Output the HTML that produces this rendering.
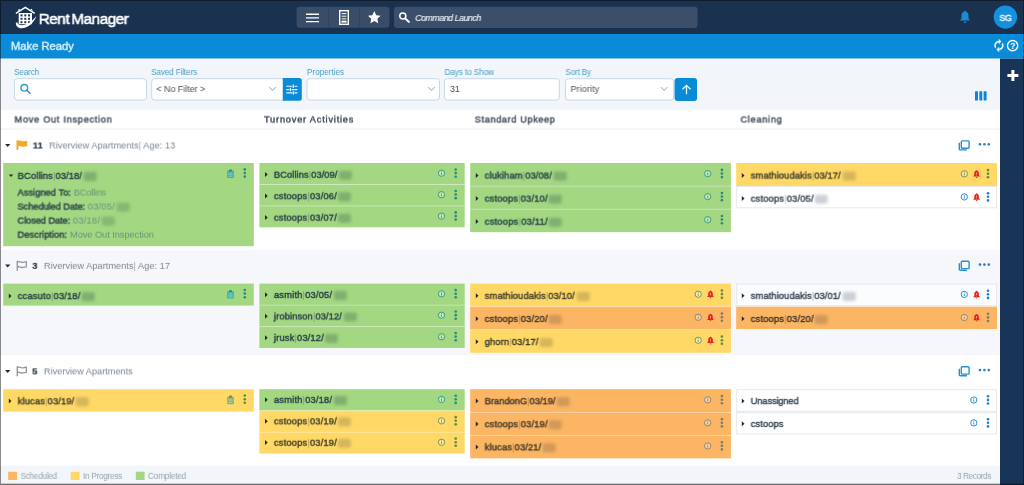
<!DOCTYPE html>
<html lang="en"><head><meta charset="utf-8"><title>Make Ready</title>
<style>
*{box-sizing:border-box;margin:0;padding:0}
html,body{width:1024px;height:485px;overflow:hidden;background:#fff;font-family:"Liberation Sans", sans-serif;}
body{position:relative}
.t{position:absolute;white-space:nowrap;line-height:1;will-change:transform}
.m{-webkit-text-stroke:0.38px currentColor}
.bl{position:absolute;width:13px;height:9px;margin-left:1.500px;margin-top:0.200px;filter:blur(1.500px);border-radius:2px}
.p{opacity:.4;-webkit-text-stroke:0}
svg{position:absolute;left:0;top:0;overflow:visible}
</style></head>
<body>
<svg width="1024" height="485" viewBox="0 0 1024 485">
<rect x="0.00" y="0.00" width="1024.00" height="34.00" fill="#1a3250"/>
<rect x="0.00" y="34.00" width="1024.00" height="24.70" fill="#0a8bd7"/>
<rect x="0.00" y="58.70" width="1000.00" height="51.30" fill="#f2f6fa"/>
<rect x="0.00" y="110.00" width="1000.00" height="19.10" fill="#fff"/>
<rect x="0.00" y="128.70" width="1000.00" height="1.00" fill="#e1e5ea"/>
<rect x="1000.00" y="58.70" width="24.00" height="427.00" fill="#183558"/>
<rect x="296.60" y="6.70" width="92.80" height="21.10" fill="#3a4d68" rx="3"/>
<rect x="328.00" y="6.70" width="1.00" height="21.10" fill="#32435c"/>
<rect x="359.00" y="6.70" width="1.00" height="21.10" fill="#32435c"/>
<rect x="394.00" y="6.80" width="303.50" height="21.10" fill="#3b4f6b" rx="3"/>
<rect x="14.50" y="78.70" width="132.00" height="21.40" fill="#fff" rx="3" stroke="#c6d9e7" stroke-width="1"/>
<rect x="151.70" y="78.70" width="132.80" height="21.40" fill="#fff" rx="3" stroke="#c6d9e7" stroke-width="1"/>
<rect x="280.00" y="78.00" width="21.80" height="22.70" fill="#0a8bd7" rx="2.5"/>
<rect x="279.50" y="77.50" width="3.00" height="24.00" fill="#f2f6fa"/>
<rect x="279.50" y="79.20" width="3.00" height="20.40" fill="#fff"/>
<rect x="279.50" y="78.20" width="3.00" height="1.00" fill="#c6d9e7"/>
<rect x="279.50" y="99.60" width="3.00" height="1.00" fill="#c6d9e7"/>
<rect x="307.00" y="78.70" width="132.50" height="21.40" fill="#fff" rx="3" stroke="#c6d9e7" stroke-width="1"/>
<rect x="444.50" y="78.70" width="114.80" height="21.40" fill="#fff" rx="3" stroke="#c6d9e7" stroke-width="1"/>
<rect x="565.50" y="78.70" width="108.10" height="21.40" fill="#fff" rx="3" stroke="#c6d9e7" stroke-width="1"/>
<rect x="674.60" y="78.00" width="22.50" height="22.90" fill="#0a8bd7" rx="3"/>
<rect x="975.00" y="91.20" width="3.00" height="9.40" fill="#0f86d2" rx="0.5"/>
<rect x="979.30" y="91.20" width="3.00" height="9.40" fill="#0f86d2" rx="0.5"/>
<rect x="983.60" y="91.20" width="3.00" height="9.40" fill="#0f86d2" rx="0.5"/>
<rect x="1007.40" y="74.00" width="11.00" height="3.00" fill="#fff"/>
<rect x="1011.40" y="70.00" width="3.00" height="11.00" fill="#fff"/>
<rect x="0.00" y="129.60" width="1000.00" height="120.60" fill="#fff"/>
<rect x="3.20" y="163.00" width="250.60" height="83.20" fill="#a3d782"/>
<rect x="259.40" y="163.00" width="205.30" height="21.45" fill="#a3d782"/>
<rect x="259.40" y="184.45" width="205.30" height="21.45" fill="#a3d782"/>
<rect x="259.40" y="184.05" width="205.30" height="1.00" fill="rgba(255,255,255,.32)"/>
<rect x="259.40" y="205.90" width="205.30" height="21.45" fill="#a3d782"/>
<rect x="259.40" y="205.50" width="205.30" height="1.00" fill="rgba(255,255,255,.32)"/>
<rect x="470.20" y="163.00" width="260.70" height="23.05" fill="#a3d782"/>
<rect x="470.20" y="186.05" width="260.70" height="23.05" fill="#a3d782"/>
<rect x="470.20" y="185.65" width="260.70" height="1.00" fill="rgba(255,255,255,.32)"/>
<rect x="470.20" y="209.10" width="260.70" height="23.05" fill="#a3d782"/>
<rect x="470.20" y="208.70" width="260.70" height="1.00" fill="rgba(255,255,255,.32)"/>
<rect x="736.20" y="163.00" width="260.80" height="23.05" fill="#ffd866"/>
<rect x="736.70" y="186.60" width="259.80" height="21.20" fill="rgba(255,255,255,.6)" stroke="#e5e9ee" stroke-width="1"/>
<rect x="0.00" y="250.00" width="1000.00" height="105.50" fill="#f5f7fb"/>
<rect x="3.20" y="283.60" width="250.60" height="22.00" fill="#a3d782"/>
<rect x="259.40" y="283.60" width="205.30" height="21.45" fill="#a3d782"/>
<rect x="259.40" y="305.05" width="205.30" height="21.45" fill="#a3d782"/>
<rect x="259.40" y="304.65" width="205.30" height="1.00" fill="rgba(255,255,255,.32)"/>
<rect x="259.40" y="326.50" width="205.30" height="21.45" fill="#a3d782"/>
<rect x="259.40" y="326.10" width="205.30" height="1.00" fill="rgba(255,255,255,.32)"/>
<rect x="470.20" y="283.60" width="260.70" height="23.05" fill="#ffd866"/>
<rect x="470.20" y="306.65" width="260.70" height="23.05" fill="#fbb563"/>
<rect x="470.20" y="306.25" width="260.70" height="1.00" fill="rgba(255,255,255,.32)"/>
<rect x="470.20" y="329.70" width="260.70" height="23.05" fill="#ffd866"/>
<rect x="470.20" y="329.30" width="260.70" height="1.00" fill="rgba(255,255,255,.32)"/>
<rect x="736.70" y="284.10" width="259.80" height="21.60" fill="rgba(255,255,255,.6)" stroke="#e5e9ee" stroke-width="1"/>
<rect x="736.20" y="306.70" width="260.80" height="22.30" fill="#fbb563"/>
<rect x="0.00" y="355.50" width="1000.00" height="110.20" fill="#fff"/>
<rect x="3.20" y="389.20" width="250.60" height="22.40" fill="#ffd866"/>
<rect x="259.40" y="389.20" width="205.30" height="21.45" fill="#a3d782"/>
<rect x="259.40" y="410.65" width="205.30" height="21.45" fill="#ffd866"/>
<rect x="259.40" y="410.25" width="205.30" height="1.00" fill="rgba(255,255,255,.32)"/>
<rect x="259.40" y="432.10" width="205.30" height="21.45" fill="#ffd866"/>
<rect x="259.40" y="431.70" width="205.30" height="1.00" fill="rgba(255,255,255,.32)"/>
<rect x="470.20" y="389.20" width="260.70" height="23.05" fill="#fbb563"/>
<rect x="470.20" y="412.25" width="260.70" height="23.05" fill="#fbb563"/>
<rect x="470.20" y="411.85" width="260.70" height="1.00" fill="rgba(255,255,255,.32)"/>
<rect x="470.20" y="435.30" width="260.70" height="23.05" fill="#fbb563"/>
<rect x="470.20" y="434.90" width="260.70" height="1.00" fill="rgba(255,255,255,.32)"/>
<rect x="736.70" y="389.70" width="259.80" height="21.60" fill="rgba(255,255,255,.6)" stroke="#e5e9ee" stroke-width="1"/>
<rect x="736.70" y="412.60" width="259.80" height="21.40" fill="rgba(255,255,255,.6)" stroke="#e5e9ee" stroke-width="1"/>
<rect x="0.00" y="465.60" width="1000.00" height="20.00" fill="#f2f6fa"/>
<rect x="8.20" y="471.70" width="8.80" height="8.30" fill="#fbb563"/>
<rect x="70.70" y="471.70" width="8.80" height="8.30" fill="#ffd866"/>
<rect x="135.80" y="471.70" width="8.80" height="8.30" fill="#a3d782"/>
<g transform="translate(15.00 6.00)"><path d="M0.900 7.300 L10.300 1.300 L19.700 7.300" fill="none" stroke="#fff" stroke-width="1.500"/>
<path d="M2.700 4.900 L3.900 2.700 L5.300 3.800z M15.300 3.800 L16.700 2.700 L17.900 4.900z" fill="#fff"/>
<rect x="3.700" y="7" width="13.300" height="11.200" fill="#fff"/>
<g fill="#1a3250"><rect x="5.500" y="8.400" width="2" height="2"/><rect x="9.300" y="8.400" width="2" height="2"/><rect x="13" y="8.400" width="2" height="2"/>
<rect x="5.500" y="11.800" width="2" height="2"/><rect x="9.300" y="11.800" width="2" height="2"/><rect x="13" y="11.800" width="2" height="2"/>
<rect x="5.500" y="15.200" width="2" height="2"/><rect x="9.300" y="15.200" width="2" height="2"/><rect x="13" y="15.200" width="2" height="2"/></g>
<path d="M0.900 16.400 C0.200 22.900 8.600 23.700 14.100 19.700 C18.100 16.800 20.400 13.400 21.400 10 C19.400 12.900 16.600 15.400 12.800 17.500 C8 20.100 3.300 19.700 2.400 16.600z" fill="#fff"/></g>
<g transform="translate(306.00 13.00)"><path d="M0 1.200h13M0 4.900h13M0 8.600h13" stroke="#fff" stroke-width="1.400"/></g>
<g transform="translate(339.00 10.00)"><rect x="0.700" y="0.700" width="8.600" height="13.600" fill="none" stroke="#fff" stroke-width="1.400"/><path d="M2.600 3.600h4.800M2.600 6.200h4.800M2.600 8.800h4.800" stroke="#fff" stroke-width="1"/><rect x="2.400" y="10.600" width="5.200" height="2" fill="#fff"/></g>
<g transform="translate(367.80 10.80) scale(0.5417)"><path d="M12 0.500l3.600 7.600 8 1-5.900 5.600 1.500 8.100L12 18.800 4.800 22.800l1.500-8.100L0.400 9.100l8-1z" fill="#fff"/></g>
<g transform="translate(398.00 11.00)"><circle cx="4.800" cy="5" r="3.050" fill="none" stroke="#fff" stroke-width="1.500"/><path d="M7.300 7.500l3.700 3.500" stroke="#fff" stroke-width="1.800" stroke-linecap="round"/></g>
<g transform="translate(960.00 10.50)"><path d="M5 0.200c0.700 0 1 0.500 1 1 1.700 0.500 2.500 2 2.500 3.800v3l1.300 1.500v0.600H0.200v-0.600l1.300-1.500v-3c0-1.800 0.800-3.300 2.500-3.800 0-0.500 0.300-1 1-1z" fill="#1c8ad0"/><path d="M3.700 10.900h2.600c0 0.900-0.600 1.500-1.300 1.500s-1.300-0.600-1.300-1.500z" fill="#1c8ad0"/></g>
<g transform="translate(1005.40 17.10)"><circle cx="0" cy="0" r="11.700" fill="#1590dc"/></g>
<g transform="translate(992.20 38.80) scale(0.56)"><path d="M12 6v3l4-4-4-4v3c-4.420 0-8 3.580-8 8 0 1.570.46 3.030 1.240 4.260L6.700 14.800c-.45-.83-.7-1.790-.7-2.800 0-3.310 2.690-6 6-6zm6.760 1.740L17.300 9.200c.44.84.7 1.790.7 2.800 0 3.310-2.690 6-6 6v-3l-4 4 4 4v-3c4.420 0 8-3.580 8-8 0-1.570-.46-3.030-1.240-4.260z" fill="#fff" stroke="#fff" stroke-width="0.700"/></g>
<g transform="translate(1012.60 45.60)"><circle cx="0" cy="0" r="5.150" fill="none" stroke="#fff" stroke-width="1.400"/></g>
<g transform="translate(19.50 83.40)"><circle cx="4.800" cy="4.400" r="3.350" fill="none" stroke="#2f9dbd" stroke-width="1.350"/><path d="M7.400 6.900l3.100 3" stroke="#3f7fb0" stroke-width="1.500" stroke-linecap="round"/></g>
<g transform="translate(268.80 86.60)"><path d="M0.500 0.500l3.200 3.300 3.200-3.300" fill="none" stroke="#9a9ea2" stroke-width="1"/></g>
<g transform="translate(286.30 84.50) scale(0.96)"><g stroke="#e8f6ff" stroke-width="1.200" fill="none"><path d="M0 1.800h6.200M8.400 1.800h3.200M7.300 0v3.600"/><path d="M0 5.300h3.200M5.400 5.300h6.200M4.300 3.500v3.600"/><path d="M0 8.800h6.200M8.400 8.800h3.200M7.300 7v3.600"/></g></g>
<g transform="translate(427.80 86.60)"><path d="M0.500 0.500l3.200 3.300 3.200-3.300" fill="none" stroke="#9a9ea2" stroke-width="1"/></g>
<g transform="translate(660.40 86.60)"><path d="M0.500 0.500l3.200 3.300 3.200-3.300" fill="none" stroke="#9a9ea2" stroke-width="1"/></g>
<g transform="translate(681.80 84.30)"><path d="M4.700 10V1.400M0.700 5l4-4 4 4" fill="none" stroke="#e8f6ff" stroke-width="1.300"/></g>
<g transform="translate(5.10 145.60)"><path d="M0 -1.500h5.200l-2.600 3z" fill="#1c2a33"/></g>
<g transform="translate(16.50 140.20)"><rect x="0" y="0" width="1.900" height="9.600" rx="0.400" fill="#f5a828"/><path d="M1.500 0.600c2-0.800 3.200 0.400 4.700 0.500s2.600-0.500 4.500-0.600v5.500c-1.900 0.100-3 0.700-4.500 0.600s-2.700-1.300-4.700-0.500z" fill="#f5a828"/></g>
<g transform="translate(958.60 140.20)"><rect x="2.700" y="0.700" width="7.800" height="7.300" rx="0.900" fill="none" stroke="#2b8fcf" stroke-width="1.400"/><path d="M0.700 2.600v6.100c0 0.600 0.400 1 1 1h6.600" fill="none" stroke="#2b8fcf" stroke-width="1.400"/></g>
<g transform="translate(980.00 144.20)"><circle cx="0" cy="0" r="1.300" fill="#2a7dc0"/></g>
<g transform="translate(984.40 144.20)"><circle cx="0" cy="0" r="1.300" fill="#2a7dc0"/></g>
<g transform="translate(988.80 144.20)"><circle cx="0" cy="0" r="1.300" fill="#2a7dc0"/></g>
<g transform="translate(8.80 175.70)"><path d="M0 -1.300h4.400l-2.200 2.600z" fill="#1c2a33"/></g>
<g transform="translate(227.10 169.40)"><rect x="0" y="1.200" width="6.800" height="7.400" rx="0.700" fill="#3fb3a8"/><rect x="2" y="0" width="2.800" height="2" rx="0.500" fill="#2f8f70"/><path d="M1.300 3.700h4.200M1.300 5.300h4.200M1.300 6.900h4.200" stroke="rgba(255,255,255,.55)" stroke-width="0.600"/></g>
<g transform="translate(244.80 173.00)"><circle cx="0" cy="-3.600" r="1.300" fill="#2a8c78"/><circle cx="0" cy="0" r="1.300" fill="#2a8c78"/><circle cx="0" cy="3.600" r="1.300" fill="#2a8c78"/></g>
<g transform="translate(265.00 174.60)"><path d="M0 -2.500l2.700 2.500-2.700 2.500z" fill="#1c2a33"/></g>
<g transform="translate(441.50 173.20)"><circle cx="0" cy="0" r="3.150" fill="rgba(255,255,255,.42)" stroke="#3a9d80" stroke-width="1"/><path d="M0 -0.600v2.300" stroke="#3a9d80" stroke-width="0.950"/><circle cx="0" cy="-1.650" r="0.520" fill="#3a9d80"/></g>
<g transform="translate(455.70 173.10)"><circle cx="0" cy="-3.600" r="1.300" fill="#2a8c78"/><circle cx="0" cy="0" r="1.300" fill="#2a8c78"/><circle cx="0" cy="3.600" r="1.300" fill="#2a8c78"/></g>
<g transform="translate(265.00 196.05)"><path d="M0 -2.500l2.700 2.500-2.700 2.500z" fill="#1c2a33"/></g>
<g transform="translate(441.50 194.65)"><circle cx="0" cy="0" r="3.150" fill="rgba(255,255,255,.42)" stroke="#3a9d80" stroke-width="1"/><path d="M0 -0.600v2.300" stroke="#3a9d80" stroke-width="0.950"/><circle cx="0" cy="-1.650" r="0.520" fill="#3a9d80"/></g>
<g transform="translate(455.70 194.55)"><circle cx="0" cy="-3.600" r="1.300" fill="#2a8c78"/><circle cx="0" cy="0" r="1.300" fill="#2a8c78"/><circle cx="0" cy="3.600" r="1.300" fill="#2a8c78"/></g>
<g transform="translate(265.00 217.50)"><path d="M0 -2.500l2.700 2.500-2.700 2.500z" fill="#1c2a33"/></g>
<g transform="translate(441.50 216.10)"><circle cx="0" cy="0" r="3.150" fill="rgba(255,255,255,.42)" stroke="#3a9d80" stroke-width="1"/><path d="M0 -0.600v2.300" stroke="#3a9d80" stroke-width="0.950"/><circle cx="0" cy="-1.650" r="0.520" fill="#3a9d80"/></g>
<g transform="translate(455.70 216.00)"><circle cx="0" cy="-3.600" r="1.300" fill="#2a8c78"/><circle cx="0" cy="0" r="1.300" fill="#2a8c78"/><circle cx="0" cy="3.600" r="1.300" fill="#2a8c78"/></g>
<g transform="translate(475.80 175.40)"><path d="M0 -2.500l2.700 2.500-2.700 2.500z" fill="#1c2a33"/></g>
<g transform="translate(707.70 173.60)"><circle cx="0" cy="0" r="3.150" fill="rgba(255,255,255,.42)" stroke="#3a9d80" stroke-width="1"/><path d="M0 -0.600v2.300" stroke="#3a9d80" stroke-width="0.950"/><circle cx="0" cy="-1.650" r="0.520" fill="#3a9d80"/></g>
<g transform="translate(721.90 173.50)"><circle cx="0" cy="-3.600" r="1.300" fill="#2a8c78"/><circle cx="0" cy="0" r="1.300" fill="#2a8c78"/><circle cx="0" cy="3.600" r="1.300" fill="#2a8c78"/></g>
<g transform="translate(475.80 198.45)"><path d="M0 -2.500l2.700 2.500-2.700 2.500z" fill="#1c2a33"/></g>
<g transform="translate(707.70 196.65)"><circle cx="0" cy="0" r="3.150" fill="rgba(255,255,255,.42)" stroke="#3a9d80" stroke-width="1"/><path d="M0 -0.600v2.300" stroke="#3a9d80" stroke-width="0.950"/><circle cx="0" cy="-1.650" r="0.520" fill="#3a9d80"/></g>
<g transform="translate(721.90 196.55)"><circle cx="0" cy="-3.600" r="1.300" fill="#2a8c78"/><circle cx="0" cy="0" r="1.300" fill="#2a8c78"/><circle cx="0" cy="3.600" r="1.300" fill="#2a8c78"/></g>
<g transform="translate(475.80 221.50)"><path d="M0 -2.500l2.700 2.500-2.700 2.500z" fill="#1c2a33"/></g>
<g transform="translate(707.70 219.70)"><circle cx="0" cy="0" r="3.150" fill="rgba(255,255,255,.42)" stroke="#3a9d80" stroke-width="1"/><path d="M0 -0.600v2.300" stroke="#3a9d80" stroke-width="0.950"/><circle cx="0" cy="-1.650" r="0.520" fill="#3a9d80"/></g>
<g transform="translate(721.90 219.60)"><circle cx="0" cy="-3.600" r="1.300" fill="#2a8c78"/><circle cx="0" cy="0" r="1.300" fill="#2a8c78"/><circle cx="0" cy="3.600" r="1.300" fill="#2a8c78"/></g>
<g transform="translate(741.80 175.40)"><path d="M0 -2.500l2.700 2.500-2.700 2.500z" fill="#1c2a33"/></g>
<g transform="translate(964.30 173.80)"><circle cx="0" cy="0" r="3.150" fill="rgba(255,255,255,.42)" stroke="#6f9c58" stroke-width="1"/><path d="M0 -0.600v2.300" stroke="#6f9c58" stroke-width="0.950"/><circle cx="0" cy="-1.650" r="0.520" fill="#6f9c58"/></g>
<g transform="translate(973.32 170.20) scale(0.82)"><path d="M4 0c0.500 0 0.800 0.300 0.800 0.800 1.400 0.400 2 1.600 2 3v2.200l1.100 1.300v0.500H0.100v-0.500l1.100-1.300v-2.200c0-1.400 0.600-2.600 2-3 0-0.500 0.300-0.800 0.800-0.800z" fill="#e3231b"/><path d="M3 8.200h2c0 0.700-0.400 1.200-1 1.200s-1-0.500-1-1.200z" fill="#e3231b"/><path d="M4 2.600v2.600" stroke="#ffc9c0" stroke-width="0.900"/><circle cx="4" cy="6.300" r="0.500" fill="#ffc9c0"/></g>
<g transform="translate(988.00 173.70)"><circle cx="0" cy="-3.600" r="1.300" fill="#5a8c42"/><circle cx="0" cy="0" r="1.300" fill="#5a8c42"/><circle cx="0" cy="3.600" r="1.300" fill="#5a8c42"/></g>
<g transform="translate(741.80 198.50)"><path d="M0 -2.500l2.700 2.500-2.700 2.500z" fill="#1c2a33"/></g>
<g transform="translate(964.30 196.90)"><circle cx="0" cy="0" r="3.150" fill="rgba(255,255,255,.42)" stroke="#2b8fd0" stroke-width="1"/><path d="M0 -0.600v2.300" stroke="#2b8fd0" stroke-width="0.950"/><circle cx="0" cy="-1.650" r="0.520" fill="#2b8fd0"/></g>
<g transform="translate(973.32 193.30) scale(0.82)"><path d="M4 0c0.500 0 0.800 0.300 0.800 0.800 1.400 0.400 2 1.600 2 3v2.200l1.100 1.300v0.500H0.100v-0.500l1.100-1.300v-2.200c0-1.400 0.600-2.600 2-3 0-0.500 0.300-0.800 0.800-0.800z" fill="#e3231b"/><path d="M3 8.200h2c0 0.700-0.400 1.200-1 1.200s-1-0.500-1-1.200z" fill="#e3231b"/><path d="M4 2.600v2.600" stroke="#ffc9c0" stroke-width="0.900"/><circle cx="4" cy="6.300" r="0.500" fill="#ffc9c0"/></g>
<g transform="translate(988.00 196.80)"><circle cx="0" cy="-3.600" r="1.300" fill="#1f80c9"/><circle cx="0" cy="0" r="1.300" fill="#1f80c9"/><circle cx="0" cy="3.600" r="1.300" fill="#1f80c9"/></g>
<g transform="translate(5.10 266.00)"><path d="M0 -1.500h5.200l-2.600 3z" fill="#1c2a33"/></g>
<g transform="translate(16.60 260.80)"><path d="M0.700 0v10" stroke="#94989d" stroke-width="1.400"/><path d="M0.600 1c2-0.800 3 0.400 4.600 0.500s2.600-0.500 4.500-0.600v5.200c-1.900 0.100-2.900 0.700-4.500 0.600s-2.600-1.300-4.600-0.500" fill="none" stroke="#94989d" stroke-width="1.300"/></g>
<g transform="translate(958.60 260.60)"><rect x="2.700" y="0.700" width="7.800" height="7.300" rx="0.900" fill="none" stroke="#2b8fcf" stroke-width="1.400"/><path d="M0.700 2.600v6.100c0 0.600 0.400 1 1 1h6.600" fill="none" stroke="#2b8fcf" stroke-width="1.400"/></g>
<g transform="translate(980.00 264.60)"><circle cx="0" cy="0" r="1.300" fill="#2a7dc0"/></g>
<g transform="translate(984.40 264.60)"><circle cx="0" cy="0" r="1.300" fill="#2a7dc0"/></g>
<g transform="translate(988.80 264.60)"><circle cx="0" cy="0" r="1.300" fill="#2a7dc0"/></g>
<g transform="translate(8.80 295.90)"><path d="M0 -2.500l2.700 2.500-2.700 2.500z" fill="#1c2a33"/></g>
<g transform="translate(227.10 290.00)"><rect x="0" y="1.200" width="6.800" height="7.400" rx="0.700" fill="#3fb3a8"/><rect x="2" y="0" width="2.800" height="2" rx="0.500" fill="#2f8f70"/><path d="M1.300 3.700h4.200M1.300 5.300h4.200M1.300 6.900h4.200" stroke="rgba(255,255,255,.55)" stroke-width="0.600"/></g>
<g transform="translate(244.80 293.60)"><circle cx="0" cy="-3.600" r="1.300" fill="#2a8c78"/><circle cx="0" cy="0" r="1.300" fill="#2a8c78"/><circle cx="0" cy="3.600" r="1.300" fill="#2a8c78"/></g>
<g transform="translate(265.00 294.80)"><path d="M0 -2.500l2.700 2.500-2.700 2.500z" fill="#1c2a33"/></g>
<g transform="translate(441.50 293.80)"><circle cx="0" cy="0" r="3.150" fill="rgba(255,255,255,.42)" stroke="#3a9d80" stroke-width="1"/><path d="M0 -0.600v2.300" stroke="#3a9d80" stroke-width="0.950"/><circle cx="0" cy="-1.650" r="0.520" fill="#3a9d80"/></g>
<g transform="translate(455.70 293.70)"><circle cx="0" cy="-3.600" r="1.300" fill="#2a8c78"/><circle cx="0" cy="0" r="1.300" fill="#2a8c78"/><circle cx="0" cy="3.600" r="1.300" fill="#2a8c78"/></g>
<g transform="translate(265.00 316.25)"><path d="M0 -2.500l2.700 2.500-2.700 2.500z" fill="#1c2a33"/></g>
<g transform="translate(441.50 315.25)"><circle cx="0" cy="0" r="3.150" fill="rgba(255,255,255,.42)" stroke="#3a9d80" stroke-width="1"/><path d="M0 -0.600v2.300" stroke="#3a9d80" stroke-width="0.950"/><circle cx="0" cy="-1.650" r="0.520" fill="#3a9d80"/></g>
<g transform="translate(455.70 315.15)"><circle cx="0" cy="-3.600" r="1.300" fill="#2a8c78"/><circle cx="0" cy="0" r="1.300" fill="#2a8c78"/><circle cx="0" cy="3.600" r="1.300" fill="#2a8c78"/></g>
<g transform="translate(265.00 337.70)"><path d="M0 -2.500l2.700 2.500-2.700 2.500z" fill="#1c2a33"/></g>
<g transform="translate(441.50 336.70)"><circle cx="0" cy="0" r="3.150" fill="rgba(255,255,255,.42)" stroke="#3a9d80" stroke-width="1"/><path d="M0 -0.600v2.300" stroke="#3a9d80" stroke-width="0.950"/><circle cx="0" cy="-1.650" r="0.520" fill="#3a9d80"/></g>
<g transform="translate(455.70 336.60)"><circle cx="0" cy="-3.600" r="1.300" fill="#2a8c78"/><circle cx="0" cy="0" r="1.300" fill="#2a8c78"/><circle cx="0" cy="3.600" r="1.300" fill="#2a8c78"/></g>
<g transform="translate(475.80 295.70)"><path d="M0 -2.500l2.700 2.500-2.700 2.500z" fill="#1c2a33"/></g>
<g transform="translate(698.20 294.20)"><circle cx="0" cy="0" r="3.150" fill="rgba(255,255,255,.42)" stroke="#6f9c58" stroke-width="1"/><path d="M0 -0.600v2.300" stroke="#6f9c58" stroke-width="0.950"/><circle cx="0" cy="-1.650" r="0.520" fill="#6f9c58"/></g>
<g transform="translate(707.22 290.60) scale(0.82)"><path d="M4 0c0.500 0 0.800 0.300 0.800 0.800 1.400 0.400 2 1.600 2 3v2.200l1.100 1.300v0.500H0.100v-0.500l1.100-1.300v-2.200c0-1.400 0.600-2.600 2-3 0-0.500 0.300-0.800 0.800-0.800z" fill="#e3231b"/><path d="M3 8.200h2c0 0.700-0.400 1.200-1 1.200s-1-0.500-1-1.200z" fill="#e3231b"/><path d="M4 2.600v2.600" stroke="#ffc9c0" stroke-width="0.900"/><circle cx="4" cy="6.300" r="0.500" fill="#ffc9c0"/></g>
<g transform="translate(721.90 294.10)"><circle cx="0" cy="-3.600" r="1.300" fill="#5a8c42"/><circle cx="0" cy="0" r="1.300" fill="#5a8c42"/><circle cx="0" cy="3.600" r="1.300" fill="#5a8c42"/></g>
<g transform="translate(475.80 318.75)"><path d="M0 -2.500l2.700 2.500-2.700 2.500z" fill="#1c2a33"/></g>
<g transform="translate(698.20 317.25)"><circle cx="0" cy="0" r="3.150" fill="rgba(255,255,255,.42)" stroke="#8a8977" stroke-width="1"/><path d="M0 -0.600v2.300" stroke="#8a8977" stroke-width="0.950"/><circle cx="0" cy="-1.650" r="0.520" fill="#8a8977"/></g>
<g transform="translate(707.22 313.65) scale(0.82)"><path d="M4 0c0.500 0 0.800 0.300 0.800 0.800 1.400 0.400 2 1.600 2 3v2.200l1.100 1.300v0.500H0.100v-0.500l1.100-1.300v-2.200c0-1.400 0.600-2.600 2-3 0-0.500 0.300-0.800 0.800-0.800z" fill="#e3231b"/><path d="M3 8.200h2c0 0.700-0.400 1.200-1 1.200s-1-0.500-1-1.200z" fill="#e3231b"/><path d="M4 2.600v2.600" stroke="#ffc9c0" stroke-width="0.900"/><circle cx="4" cy="6.300" r="0.500" fill="#ffc9c0"/></g>
<g transform="translate(721.90 317.15)"><circle cx="0" cy="-3.600" r="1.300" fill="#7b7d70"/><circle cx="0" cy="0" r="1.300" fill="#7b7d70"/><circle cx="0" cy="3.600" r="1.300" fill="#7b7d70"/></g>
<g transform="translate(475.80 341.80)"><path d="M0 -2.500l2.700 2.500-2.700 2.500z" fill="#1c2a33"/></g>
<g transform="translate(698.20 340.30)"><circle cx="0" cy="0" r="3.150" fill="rgba(255,255,255,.42)" stroke="#6f9c58" stroke-width="1"/><path d="M0 -0.600v2.300" stroke="#6f9c58" stroke-width="0.950"/><circle cx="0" cy="-1.650" r="0.520" fill="#6f9c58"/></g>
<g transform="translate(707.22 336.70) scale(0.82)"><path d="M4 0c0.500 0 0.800 0.300 0.800 0.800 1.400 0.400 2 1.600 2 3v2.200l1.100 1.300v0.500H0.100v-0.500l1.100-1.300v-2.200c0-1.400 0.600-2.600 2-3 0-0.500 0.300-0.800 0.800-0.800z" fill="#e3231b"/><path d="M3 8.200h2c0 0.700-0.400 1.200-1 1.200s-1-0.500-1-1.200z" fill="#e3231b"/><path d="M4 2.600v2.600" stroke="#ffc9c0" stroke-width="0.900"/><circle cx="4" cy="6.300" r="0.500" fill="#ffc9c0"/></g>
<g transform="translate(721.90 340.20)"><circle cx="0" cy="-3.600" r="1.300" fill="#5a8c42"/><circle cx="0" cy="0" r="1.300" fill="#5a8c42"/><circle cx="0" cy="3.600" r="1.300" fill="#5a8c42"/></g>
<g transform="translate(741.80 295.70)"><path d="M0 -2.500l2.700 2.500-2.700 2.500z" fill="#1c2a33"/></g>
<g transform="translate(964.30 294.40)"><circle cx="0" cy="0" r="3.150" fill="rgba(255,255,255,.42)" stroke="#2b8fd0" stroke-width="1"/><path d="M0 -0.600v2.300" stroke="#2b8fd0" stroke-width="0.950"/><circle cx="0" cy="-1.650" r="0.520" fill="#2b8fd0"/></g>
<g transform="translate(973.32 290.80) scale(0.82)"><path d="M4 0c0.500 0 0.800 0.300 0.800 0.800 1.400 0.400 2 1.600 2 3v2.200l1.100 1.300v0.500H0.100v-0.500l1.100-1.300v-2.200c0-1.400 0.600-2.600 2-3 0-0.500 0.300-0.800 0.800-0.800z" fill="#e3231b"/><path d="M3 8.200h2c0 0.700-0.400 1.200-1 1.200s-1-0.500-1-1.200z" fill="#e3231b"/><path d="M4 2.600v2.600" stroke="#ffc9c0" stroke-width="0.900"/><circle cx="4" cy="6.300" r="0.500" fill="#ffc9c0"/></g>
<g transform="translate(988.00 294.30)"><circle cx="0" cy="-3.600" r="1.300" fill="#1f80c9"/><circle cx="0" cy="0" r="1.300" fill="#1f80c9"/><circle cx="0" cy="3.600" r="1.300" fill="#1f80c9"/></g>
<g transform="translate(741.80 318.80)"><path d="M0 -2.500l2.700 2.500-2.700 2.500z" fill="#1c2a33"/></g>
<g transform="translate(964.30 317.50)"><circle cx="0" cy="0" r="3.150" fill="rgba(255,255,255,.42)" stroke="#8a8977" stroke-width="1"/><path d="M0 -0.600v2.300" stroke="#8a8977" stroke-width="0.950"/><circle cx="0" cy="-1.650" r="0.520" fill="#8a8977"/></g>
<g transform="translate(973.32 313.90) scale(0.82)"><path d="M4 0c0.500 0 0.800 0.300 0.800 0.800 1.400 0.400 2 1.600 2 3v2.200l1.100 1.300v0.500H0.100v-0.500l1.100-1.300v-2.200c0-1.400 0.600-2.600 2-3 0-0.500 0.300-0.800 0.800-0.800z" fill="#e3231b"/><path d="M3 8.200h2c0 0.700-0.400 1.200-1 1.200s-1-0.500-1-1.200z" fill="#e3231b"/><path d="M4 2.600v2.600" stroke="#ffc9c0" stroke-width="0.900"/><circle cx="4" cy="6.300" r="0.500" fill="#ffc9c0"/></g>
<g transform="translate(988.00 317.40)"><circle cx="0" cy="-3.600" r="1.300" fill="#7b7d70"/><circle cx="0" cy="0" r="1.300" fill="#7b7d70"/><circle cx="0" cy="3.600" r="1.300" fill="#7b7d70"/></g>
<g transform="translate(5.10 371.50)"><path d="M0 -1.500h5.200l-2.600 3z" fill="#1c2a33"/></g>
<g transform="translate(16.60 366.30)"><path d="M0.700 0v10" stroke="#94989d" stroke-width="1.400"/><path d="M0.600 1c2-0.800 3 0.400 4.600 0.500s2.600-0.500 4.500-0.600v5.200c-1.900 0.100-2.900 0.700-4.500 0.600s-2.600-1.300-4.600-0.500" fill="none" stroke="#94989d" stroke-width="1.300"/></g>
<g transform="translate(958.60 366.10)"><rect x="2.700" y="0.700" width="7.800" height="7.300" rx="0.900" fill="none" stroke="#2b8fcf" stroke-width="1.400"/><path d="M0.700 2.600v6.100c0 0.600 0.400 1 1 1h6.600" fill="none" stroke="#2b8fcf" stroke-width="1.400"/></g>
<g transform="translate(980.00 370.10)"><circle cx="0" cy="0" r="1.300" fill="#2a7dc0"/></g>
<g transform="translate(984.40 370.10)"><circle cx="0" cy="0" r="1.300" fill="#2a7dc0"/></g>
<g transform="translate(988.80 370.10)"><circle cx="0" cy="0" r="1.300" fill="#2a7dc0"/></g>
<g transform="translate(8.80 401.10)"><path d="M0 -2.500l2.700 2.500-2.700 2.500z" fill="#1c2a33"/></g>
<g transform="translate(227.10 395.60)"><rect x="0" y="1.200" width="6.800" height="7.400" rx="0.700" fill="#8db070"/><rect x="2" y="0" width="2.800" height="2" rx="0.500" fill="#5a8c42"/><path d="M1.300 3.700h4.200M1.300 5.300h4.200M1.300 6.900h4.200" stroke="rgba(255,255,255,.55)" stroke-width="0.600"/></g>
<g transform="translate(244.80 399.20)"><circle cx="0" cy="-3.600" r="1.300" fill="#5a8c42"/><circle cx="0" cy="0" r="1.300" fill="#5a8c42"/><circle cx="0" cy="3.600" r="1.300" fill="#5a8c42"/></g>
<g transform="translate(265.00 399.70)"><path d="M0 -2.500l2.700 2.500-2.700 2.500z" fill="#1c2a33"/></g>
<g transform="translate(441.50 399.40)"><circle cx="0" cy="0" r="3.150" fill="rgba(255,255,255,.42)" stroke="#3a9d80" stroke-width="1"/><path d="M0 -0.600v2.300" stroke="#3a9d80" stroke-width="0.950"/><circle cx="0" cy="-1.650" r="0.520" fill="#3a9d80"/></g>
<g transform="translate(455.70 399.30)"><circle cx="0" cy="-3.600" r="1.300" fill="#2a8c78"/><circle cx="0" cy="0" r="1.300" fill="#2a8c78"/><circle cx="0" cy="3.600" r="1.300" fill="#2a8c78"/></g>
<g transform="translate(265.00 421.15)"><path d="M0 -2.500l2.700 2.500-2.700 2.500z" fill="#1c2a33"/></g>
<g transform="translate(441.50 420.85)"><circle cx="0" cy="0" r="3.150" fill="rgba(255,255,255,.42)" stroke="#6f9c58" stroke-width="1"/><path d="M0 -0.600v2.300" stroke="#6f9c58" stroke-width="0.950"/><circle cx="0" cy="-1.650" r="0.520" fill="#6f9c58"/></g>
<g transform="translate(455.70 420.75)"><circle cx="0" cy="-3.600" r="1.300" fill="#5a8c42"/><circle cx="0" cy="0" r="1.300" fill="#5a8c42"/><circle cx="0" cy="3.600" r="1.300" fill="#5a8c42"/></g>
<g transform="translate(265.00 442.60)"><path d="M0 -2.500l2.700 2.500-2.700 2.500z" fill="#1c2a33"/></g>
<g transform="translate(441.50 442.30)"><circle cx="0" cy="0" r="3.150" fill="rgba(255,255,255,.42)" stroke="#6f9c58" stroke-width="1"/><path d="M0 -0.600v2.300" stroke="#6f9c58" stroke-width="0.950"/><circle cx="0" cy="-1.650" r="0.520" fill="#6f9c58"/></g>
<g transform="translate(455.70 442.20)"><circle cx="0" cy="-3.600" r="1.300" fill="#5a8c42"/><circle cx="0" cy="0" r="1.300" fill="#5a8c42"/><circle cx="0" cy="3.600" r="1.300" fill="#5a8c42"/></g>
<g transform="translate(475.80 401.00)"><path d="M0 -2.500l2.700 2.500-2.700 2.500z" fill="#1c2a33"/></g>
<g transform="translate(707.70 399.80)"><circle cx="0" cy="0" r="3.150" fill="rgba(255,255,255,.42)" stroke="#8a8977" stroke-width="1"/><path d="M0 -0.600v2.300" stroke="#8a8977" stroke-width="0.950"/><circle cx="0" cy="-1.650" r="0.520" fill="#8a8977"/></g>
<g transform="translate(721.90 399.70)"><circle cx="0" cy="-3.600" r="1.300" fill="#7b7d70"/><circle cx="0" cy="0" r="1.300" fill="#7b7d70"/><circle cx="0" cy="3.600" r="1.300" fill="#7b7d70"/></g>
<g transform="translate(475.80 424.05)"><path d="M0 -2.500l2.700 2.500-2.700 2.500z" fill="#1c2a33"/></g>
<g transform="translate(707.70 422.85)"><circle cx="0" cy="0" r="3.150" fill="rgba(255,255,255,.42)" stroke="#8a8977" stroke-width="1"/><path d="M0 -0.600v2.300" stroke="#8a8977" stroke-width="0.950"/><circle cx="0" cy="-1.650" r="0.520" fill="#8a8977"/></g>
<g transform="translate(721.90 422.75)"><circle cx="0" cy="-3.600" r="1.300" fill="#7b7d70"/><circle cx="0" cy="0" r="1.300" fill="#7b7d70"/><circle cx="0" cy="3.600" r="1.300" fill="#7b7d70"/></g>
<g transform="translate(475.80 447.10)"><path d="M0 -2.500l2.700 2.500-2.700 2.500z" fill="#1c2a33"/></g>
<g transform="translate(707.70 445.90)"><circle cx="0" cy="0" r="3.150" fill="rgba(255,255,255,.42)" stroke="#8a8977" stroke-width="1"/><path d="M0 -0.600v2.300" stroke="#8a8977" stroke-width="0.950"/><circle cx="0" cy="-1.650" r="0.520" fill="#8a8977"/></g>
<g transform="translate(721.90 445.80)"><circle cx="0" cy="-3.600" r="1.300" fill="#7b7d70"/><circle cx="0" cy="0" r="1.300" fill="#7b7d70"/><circle cx="0" cy="3.600" r="1.300" fill="#7b7d70"/></g>
<g transform="translate(741.80 400.90)"><path d="M0 -2.500l2.700 2.500-2.700 2.500z" fill="#1c2a33"/></g>
<g transform="translate(973.80 400.00)"><circle cx="0" cy="0" r="3.150" fill="rgba(255,255,255,.42)" stroke="#2b8fd0" stroke-width="1"/><path d="M0 -0.600v2.300" stroke="#2b8fd0" stroke-width="0.950"/><circle cx="0" cy="-1.650" r="0.520" fill="#2b8fd0"/></g>
<g transform="translate(988.00 399.90)"><circle cx="0" cy="-3.600" r="1.300" fill="#1f80c9"/><circle cx="0" cy="0" r="1.300" fill="#1f80c9"/><circle cx="0" cy="3.600" r="1.300" fill="#1f80c9"/></g>
<g transform="translate(741.80 423.80)"><path d="M0 -2.500l2.700 2.500-2.700 2.500z" fill="#1c2a33"/></g>
<g transform="translate(973.80 422.90)"><circle cx="0" cy="0" r="3.150" fill="rgba(255,255,255,.42)" stroke="#2b8fd0" stroke-width="1"/><path d="M0 -0.600v2.300" stroke="#2b8fd0" stroke-width="0.950"/><circle cx="0" cy="-1.650" r="0.520" fill="#2b8fd0"/></g>
<g transform="translate(988.00 422.80)"><circle cx="0" cy="-3.600" r="1.300" fill="#1f80c9"/><circle cx="0" cy="0" r="1.300" fill="#1f80c9"/><circle cx="0" cy="3.600" r="1.300" fill="#1f80c9"/></g>
<rect x="0" y="0" width="1024" height="1" fill="rgba(0,0,0,.42)"/><rect x="0" y="1" width="1" height="484" fill="rgba(0,0,0,.45)"/><rect x="1" y="483.700" width="1023" height="1.300" fill="rgba(0,0,0,.55)"/><rect x="1023" y="1" width="1" height="482.700" fill="rgba(0,0,0,.35)"/>
</svg>
<div class="t" id="logo1" style="left:38px;top:11.30px;font-size:15.4px;color:#fff;transform:translate(0.70px,0.00px) rotate(0.02deg);letter-spacing:-0.532px;-webkit-text-stroke:0.55px #fff;">Rent</div>
<div class="t" id="logo2" style="left:71px;top:11.30px;font-size:15.4px;color:#fff;transform:translate(0.30px,0.00px) rotate(0.02deg);letter-spacing:-0.512px;-webkit-text-stroke:0.55px #fff;">Manager</div>
<div class="t" id="cmd" style="left:415px;top:14.05px;font-size:8.9px;color:#e9eef4;transform:translate(0.20px,0.00px) rotate(0.02deg);font-style:italic;letter-spacing:-0.488px;-webkit-text-stroke:0.15px #e9eef4;">Command Launch</div>
<div class="t m" id="sg" style="left:999px;top:13.10px;font-size:8.8px;color:#fff;transform:translate(0.50px,0.90px) rotate(0.02deg);letter-spacing:-0.357px;">SG</div>
<div class="t m" id="mr" style="left:10px;top:39.85px;font-size:11.3px;color:#d9f2fe;transform:translate(0.90px,0.90px) rotate(0.02deg);letter-spacing:-0.064px;">Make Ready</div>
<div class="t" style="left:1010px;top:41.00px;font-size:9px;color:#fff;transform:translate(0.10px,0.90px) rotate(0.02deg);font-weight:bold;">?</div>
<div class="t" id="l1" style="left:14px;top:68.90px;font-size:8.2px;color:#45a0c8;transform:translate(0.10px,0.00px) rotate(0.02deg);letter-spacing:-0.164px;">Search</div>
<div class="t" id="l2" style="left:151px;top:68.90px;font-size:8.2px;color:#45a0c8;transform:translate(0.20px,0.00px) rotate(0.02deg);letter-spacing:-0.142px;">Saved Filters</div>
<div class="t" id="l3" style="left:306px;top:68.90px;font-size:8.2px;color:#45a0c8;transform:translate(0.90px,0.00px) rotate(0.02deg);letter-spacing:-0.017px;">Properties</div>
<div class="t" id="l4" style="left:444px;top:68.90px;font-size:8.2px;color:#45a0c8;transform:translate(0.50px,0.00px) rotate(0.02deg);letter-spacing:-0.091px;">Days to Show</div>
<div class="t" id="l5" style="left:565px;top:68.90px;font-size:8.2px;color:#45a0c8;transform:translate(0.40px,0.00px) rotate(0.02deg);letter-spacing:-0.198px;">Sort By</div>
<div class="t" id="nf" style="left:156px;top:85.00px;font-size:9px;color:#4b4f55;transform:translate(0.30px,0.00px) rotate(0.02deg);letter-spacing:-0.04px;">&lt; No Filter &gt;</div>
<div class="t" id="d31" style="left:450px;top:85.00px;font-size:9px;color:#4b4f55;transform:translate(0.00px,0.00px) rotate(0.02deg);letter-spacing:-0.205px;">31</div>
<div class="t" id="pri" style="left:570px;top:85.00px;font-size:9px;color:#4b4f55;transform:translate(0.50px,0.00px) rotate(0.02deg);letter-spacing:0.112px;">Priority</div>
<div class="t m" id="h1" style="left:14px;top:114.90px;font-size:9.2px;color:#3a4552;transform:translate(0.50px,0.50px) rotate(0.02deg);letter-spacing:0.722px;">Move Out Inspection</div>
<div class="t m" id="h2" style="left:264px;top:114.90px;font-size:9.2px;color:#3a4552;transform:translate(0.00px,0.50px) rotate(0.02deg);letter-spacing:0.815px;">Turnover Activities</div>
<div class="t m" id="h3" style="left:474px;top:114.90px;font-size:9.2px;color:#3a4552;transform:translate(0.70px,0.50px) rotate(0.02deg);letter-spacing:0.62px;">Standard Upkeep</div>
<div class="t m" id="h4" style="left:740px;top:114.90px;font-size:9.2px;color:#3a4552;transform:translate(0.50px,0.50px) rotate(0.02deg);letter-spacing:0.723px;">Cleaning</div>
<div class="t" style="left:32px;top:140.20px;font-size:9.6px;color:#263242;transform:translate(0.70px,0.50px) rotate(0.02deg);font-weight:bold;-webkit-text-stroke:0.15px #263242;">11</div>
<div class="t" id="g11" style="left:49px;top:140.90px;font-size:9.2px;color:#79838d;transform:translate(0.20px,0.50px) rotate(0.02deg);letter-spacing:0.037px;">Riverview Apartments<span style="opacity:.7">|</span> Age: 13</div>
<div class="t m" id="c1" style="left:17px;top:170.85px;font-size:9.3px;color:#223b44;transform:translate(0.70px,0.90px) rotate(0.02deg);letter-spacing:0.128px;">BCollins<span class="p">|</span>03/18/<span class="bl" style="background:rgba(70,110,80,.38)"></span></div>
<div class="t m" id="d0" style="left:17px;top:187.85px;font-size:9.3px;color:#223b44;transform:translate(0.50px,0.60px) rotate(0.02deg);letter-spacing:0.035px;">Assigned To:</div>
<div class="t" id="v0" style="left:73px;top:187.85px;font-size:9.3px;color:#64947a;transform:translate(0.70px,0.60px) rotate(0.02deg);letter-spacing:-0.227px;">BCollins</div>
<div class="t m" id="d1" style="left:17px;top:201.85px;font-size:9.3px;color:#223b44;transform:translate(0.50px,0.60px) rotate(0.02deg);letter-spacing:-0.078px;">Scheduled Date:</div>
<div class="t" id="v1" style="left:87px;top:201.85px;font-size:9.3px;color:#64947a;transform:translate(0.70px,0.60px) rotate(0.02deg);letter-spacing:0.224px;">03/05/<span class="bl" style="background:rgba(70,110,80,.3)"></span></div>
<div class="t m" id="d2" style="left:17px;top:215.85px;font-size:9.3px;color:#223b44;transform:translate(0.50px,0.60px) rotate(0.02deg);letter-spacing:-0.088px;">Closed Date:</div>
<div class="t" id="v2" style="left:72px;top:215.85px;font-size:9.3px;color:#64947a;transform:translate(0.80px,0.60px) rotate(0.02deg);letter-spacing:0.224px;">03/18/<span class="bl" style="background:rgba(70,110,80,.3)"></span></div>
<div class="t m" id="d3" style="left:17px;top:229.85px;font-size:9.3px;color:#223b44;transform:translate(0.50px,0.70px) rotate(0.02deg);letter-spacing:0.05px;">Description:</div>
<div class="t" id="v3" style="left:70px;top:229.85px;font-size:9.3px;color:#64947a;transform:translate(0.00px,0.70px) rotate(0.02deg);letter-spacing:-0.073px;">Move Out Inspection</div>
<div class="t m" id="c2" style="left:273px;top:169.85px;font-size:9.3px;color:#223b44;transform:translate(0.90px,0.80px) rotate(0.02deg);letter-spacing:0.073px;">BCollins<span class="p">|</span>03/09/<span class="bl" style="background:rgba(70,110,80,.38)"></span></div>
<div class="t m" id="c3" style="left:273px;top:191.85px;font-size:9.3px;color:#223b44;transform:translate(0.90px,0.25px) rotate(0.02deg);letter-spacing:0.189px;">cstoops<span class="p">|</span>03/06/<span class="bl" style="background:rgba(70,110,80,.38)"></span></div>
<div class="t m" id="c4" style="left:273px;top:212.85px;font-size:9.3px;color:#223b44;transform:translate(0.90px,0.70px) rotate(0.02deg);letter-spacing:0.189px;">cstoops<span class="p">|</span>03/07/<span class="bl" style="background:rgba(70,110,80,.38)"></span></div>
<div class="t m" id="c5" style="left:484px;top:170.85px;font-size:9.3px;color:#223b44;transform:translate(0.70px,0.60px) rotate(0.02deg);letter-spacing:0.144px;">clukiham<span class="p">|</span>03/08/<span class="bl" style="background:rgba(70,110,80,.38)"></span></div>
<div class="t m" id="c6" style="left:484px;top:193.85px;font-size:9.3px;color:#223b44;transform:translate(0.70px,0.65px) rotate(0.02deg);letter-spacing:0.189px;">cstoops<span class="p">|</span>03/10/<span class="bl" style="background:rgba(70,110,80,.38)"></span></div>
<div class="t m" id="c7" style="left:484px;top:216.85px;font-size:9.3px;color:#223b44;transform:translate(0.70px,0.70px) rotate(0.02deg);letter-spacing:0.238px;">cstoops<span class="p">|</span>03/11/<span class="bl" style="background:rgba(70,110,80,.38)"></span></div>
<div class="t m" id="c8" style="left:750px;top:170.85px;font-size:9.3px;color:#3a3a2a;transform:translate(0.70px,0.60px) rotate(0.02deg);letter-spacing:0.117px;">smathioudakis<span class="p">|</span>03/17/<span class="bl" style="background:rgba(150,130,70,.4)"></span></div>
<div class="t m" id="c9" style="left:750px;top:193.85px;font-size:9.3px;color:#2f3e4e;transform:translate(0.70px,0.70px) rotate(0.02deg);letter-spacing:0.189px;">cstoops<span class="p">|</span>03/05/<span class="bl" style="background:rgba(130,140,155,.4)"></span></div>
<div class="t" style="left:32px;top:260.20px;font-size:9.6px;color:#263242;transform:translate(0.20px,0.90px) rotate(0.02deg);font-weight:bold;-webkit-text-stroke:0.15px #263242;">3</div>
<div class="t" id="g3" style="left:43px;top:260.90px;font-size:9.2px;color:#79838d;transform:translate(0.90px,0.90px) rotate(0.02deg);letter-spacing:0.037px;">Riverview Apartments<span style="opacity:.7">|</span> Age: 17</div>
<div class="t m" id="c10" style="left:17px;top:291.85px;font-size:9.3px;color:#223b44;transform:translate(0.70px,0.10px) rotate(0.02deg);letter-spacing:0.171px;">ccasuto<span class="p">|</span>03/18/<span class="bl" style="background:rgba(70,110,80,.38)"></span></div>
<div class="t m" id="c11" style="left:273px;top:290.85px;font-size:9.3px;color:#223b44;transform:translate(0.90px,0.00px) rotate(0.02deg);letter-spacing:0.192px;">asmith<span class="p">|</span>03/05/<span class="bl" style="background:rgba(70,110,80,.38)"></span></div>
<div class="t m" id="c12" style="left:273px;top:311.85px;font-size:9.3px;color:#223b44;transform:translate(0.90px,0.45px) rotate(0.02deg);letter-spacing:0.128px;">jrobinson<span class="p">|</span>03/12/<span class="bl" style="background:rgba(70,110,80,.38)"></span></div>
<div class="t m" id="c13" style="left:273px;top:332.85px;font-size:9.3px;color:#223b44;transform:translate(0.90px,0.90px) rotate(0.02deg);letter-spacing:0.166px;">jrusk<span class="p">|</span>03/12/<span class="bl" style="background:rgba(70,110,80,.38)"></span></div>
<div class="t m" id="c14" style="left:484px;top:290.85px;font-size:9.3px;color:#3a3a2a;transform:translate(0.70px,0.90px) rotate(0.02deg);letter-spacing:0.117px;">smathioudakis<span class="p">|</span>03/10/<span class="bl" style="background:rgba(150,130,70,.4)"></span></div>
<div class="t m" id="c15" style="left:484px;top:313.85px;font-size:9.3px;color:#3d3427;transform:translate(0.70px,0.95px) rotate(0.02deg);letter-spacing:0.189px;">cstoops<span class="p">|</span>03/20/<span class="bl" style="background:rgba(150,110,70,.4)"></span></div>
<div class="t m" id="c16" style="left:484px;top:337.85px;font-size:9.3px;color:#3a3a2a;transform:translate(0.70px,0.00px) rotate(0.02deg);letter-spacing:0.14px;">ghorn<span class="p">|</span>03/17/<span class="bl" style="background:rgba(150,130,70,.4)"></span></div>
<div class="t m" id="c17" style="left:750px;top:290.85px;font-size:9.3px;color:#2f3e4e;transform:translate(0.70px,0.90px) rotate(0.02deg);letter-spacing:0.117px;">smathioudakis<span class="p">|</span>03/01/<span class="bl" style="background:rgba(130,140,155,.4)"></span></div>
<div class="t m" id="c18" style="left:750px;top:314.85px;font-size:9.3px;color:#3d3427;transform:translate(0.70px,0.00px) rotate(0.02deg);letter-spacing:0.189px;">cstoops<span class="p">|</span>03/20/<span class="bl" style="background:rgba(150,110,70,.4)"></span></div>
<div class="t" style="left:32px;top:366.20px;font-size:9.6px;color:#263242;transform:translate(0.20px,0.40px) rotate(0.02deg);font-weight:bold;-webkit-text-stroke:0.15px #263242;">5</div>
<div class="t" id="g5" style="left:43px;top:366.90px;font-size:9.2px;color:#79838d;transform:translate(0.90px,0.40px) rotate(0.02deg);">Riverview Apartments</div>
<div class="t m" id="c19" style="left:17px;top:396.85px;font-size:9.3px;color:#3a3a2a;transform:translate(0.70px,0.30px) rotate(0.02deg);letter-spacing:0.15px;">klucas<span class="p">|</span>03/19/<span class="bl" style="background:rgba(150,130,70,.4)"></span></div>
<div class="t m" id="c20" style="left:273px;top:394.85px;font-size:9.3px;color:#223b44;transform:translate(0.90px,0.90px) rotate(0.02deg);letter-spacing:0.192px;">asmith<span class="p">|</span>03/18/<span class="bl" style="background:rgba(70,110,80,.38)"></span></div>
<div class="t m" id="c21" style="left:273px;top:416.85px;font-size:9.3px;color:#3a3a2a;transform:translate(0.90px,0.35px) rotate(0.02deg);letter-spacing:0.189px;">cstoops<span class="p">|</span>03/19/<span class="bl" style="background:rgba(150,130,70,.4)"></span></div>
<div class="t m" id="c22" style="left:273px;top:437.85px;font-size:9.3px;color:#3a3a2a;transform:translate(0.90px,0.80px) rotate(0.02deg);letter-spacing:0.189px;">cstoops<span class="p">|</span>03/19/<span class="bl" style="background:rgba(150,130,70,.4)"></span></div>
<div class="t m" id="c23" style="left:484px;top:396.85px;font-size:9.3px;color:#3d3427;transform:translate(0.70px,0.20px) rotate(0.02deg);letter-spacing:-0.001px;">BrandonG<span class="p">|</span>03/19/<span class="bl" style="background:rgba(150,110,70,.4)"></span></div>
<div class="t m" id="c24" style="left:484px;top:419.85px;font-size:9.3px;color:#3d3427;transform:translate(0.70px,0.25px) rotate(0.02deg);letter-spacing:0.189px;">cstoops<span class="p">|</span>03/19/<span class="bl" style="background:rgba(150,110,70,.4)"></span></div>
<div class="t m" id="c25" style="left:484px;top:442.85px;font-size:9.3px;color:#3d3427;transform:translate(0.70px,0.30px) rotate(0.02deg);letter-spacing:0.15px;">klucas<span class="p">|</span>03/21/<span class="bl" style="background:rgba(150,110,70,.4)"></span></div>
<div class="t m" id="c26" style="left:750px;top:396.85px;font-size:9.3px;color:#2f3e4e;transform:translate(0.70px,0.10px) rotate(0.02deg);letter-spacing:-0.142px;">Unassigned</div>
<div class="t m" id="c27" style="left:750px;top:419.85px;font-size:9.3px;color:#2f3e4e;transform:translate(0.70px,0.00px) rotate(0.02deg);letter-spacing:0.095px;">cstoops</div>
<div class="t" id="lg1" style="left:20px;top:471.30px;font-size:8.4px;color:#9da5ad;transform:translate(0.50px,0.90px) rotate(0.02deg);letter-spacing:-0.355px;">Scheduled</div>
<div class="t" id="lg2" style="left:83px;top:471.30px;font-size:8.4px;color:#9da5ad;transform:translate(0.00px,0.90px) rotate(0.02deg);letter-spacing:-0.359px;">In Progress</div>
<div class="t" id="lg3" style="left:147px;top:471.30px;font-size:8.4px;color:#9da5ad;transform:translate(0.90px,0.90px) rotate(0.02deg);letter-spacing:-0.28px;">Completed</div>
<div class="t" id="rec" style="left:957px;top:471.30px;font-size:8.4px;color:#9da5ad;transform:translate(0.00px,0.90px) rotate(0.02deg);letter-spacing:-0.476px;">3 Records</div>
</body></html>
